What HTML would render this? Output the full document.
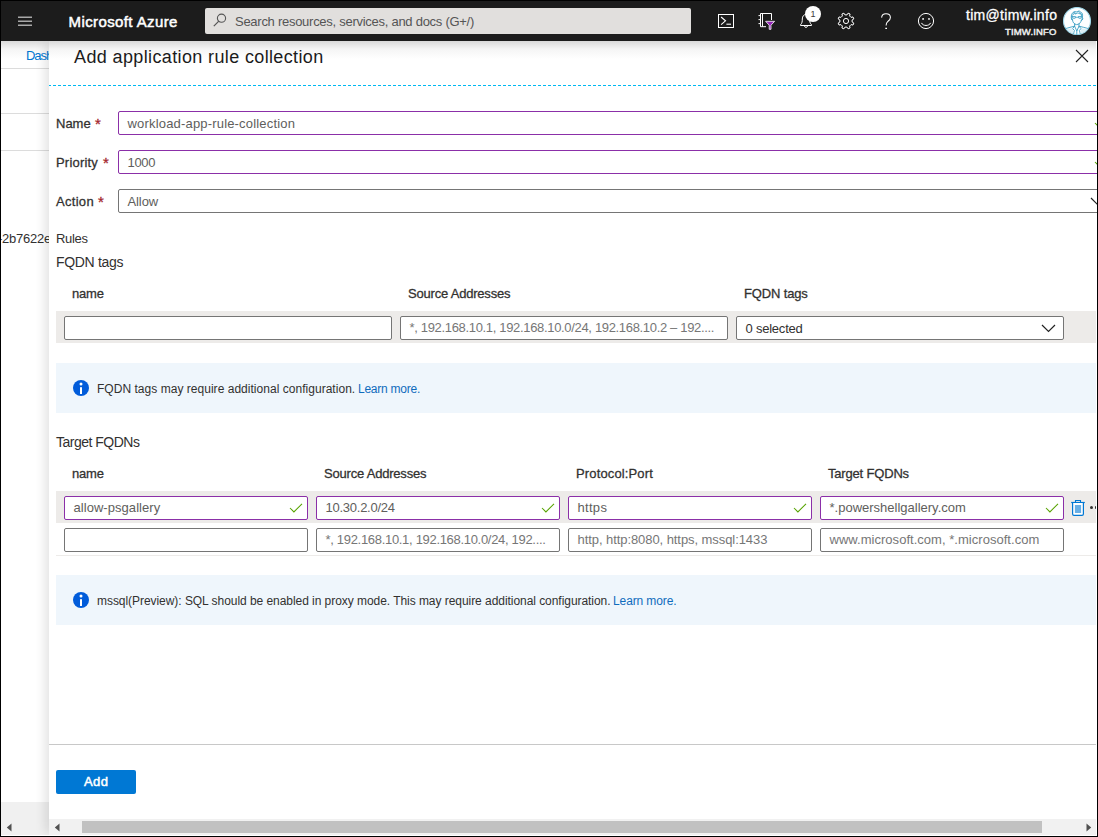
<!DOCTYPE html>
<html lang="en">
<head>
<meta charset="utf-8">
<title>Add application rule collection - Microsoft Azure</title>
<style>
html,body{margin:0;padding:0;}
body{width:1098px;height:837px;overflow:hidden;background:#fff;position:relative;
  font-family:"Liberation Sans",sans-serif;font-size:13px;color:#323130;}
*{box-sizing:border-box;}
.abs{position:absolute;}
.t{position:absolute;white-space:nowrap;line-height:1;}
.sb{-webkit-text-stroke:0.28px currentColor;}
/* frame */
#frame-l{left:0;top:0;width:1px;height:837px;background:#000;z-index:50;}
#frame-t{left:0;top:0;width:1098px;height:1px;background:#000;z-index:50;}
#frame-r{left:1097px;top:0;width:1px;height:837px;background:#000;z-index:50;}
#white-r{left:1096px;top:41px;width:1px;height:795px;background:#fff;z-index:48;}
#frame-b{left:0;top:835px;width:1098px;height:2px;background:linear-gradient(180deg,#fff 0 1px,#000 1px 2px);z-index:49;}
/* top bar */
#topbar{left:1px;top:1px;width:1096px;height:40px;background:#1c1c1c;z-index:20;}
#search{left:204px;top:7px;width:486px;height:26px;background:#e1dfdd;border-radius:2px;}
/* background page */
#bg{left:1px;top:41px;width:1095px;height:794px;background:#fff;}
.hl{position:absolute;left:0;width:48px;height:1px;background:#dcdcdc;}
#topshadow{left:1px;top:41px;width:1095px;height:18px;background:linear-gradient(180deg,rgba(0,0,0,.15),rgba(0,0,0,.04) 45%,rgba(0,0,0,0));z-index:15;pointer-events:none;}
/* panel */
#panel{left:49px;top:41px;width:1048px;overflow:hidden;height:794px;background:#fff;box-shadow:-6px 0 10px -2px rgba(0,0,0,.11);}
#dash{left:0;top:44px;width:1047px;height:1px;background:repeating-linear-gradient(90deg,#00b8f1 0 3px,transparent 3px 5px) -1px 0;}
.inp{position:absolute;height:24px;border:1px solid #757575;border-radius:2px;background:#fff;}
.inp.v{border-color:#8b2fa8;}
.inp > span{position:absolute;left:8.5px;top:5px;line-height:1;white-space:nowrap;color:#605e5c;}
.inp > span.ph{color:#767676;}
.inp.g > span{top:4px;}
.req{color:#a4262c;font-size:15px;}
.grow{position:absolute;left:7px;width:1040px;height:32px;background:#edebe9;}
.info{position:absolute;left:7px;width:1040px;height:50px;background:#eff6fc;}
.link{color:#0f6cbd;}
.chk{position:absolute;width:14px;height:10px;}
</style>
</head>
<body>
<div id="bg" class="abs">
  <span class="t" style="left:25px;top:8px;color:#0078d4;font-size:13px;letter-spacing:-1.05px;">Dashboard</span>
  <div class="hl" style="top:27px;"></div>
  <div class="hl" style="top:72px;"></div>
  <div class="hl" style="top:109px;"></div>
  <span class="t" style="left:-3px;top:191px;color:#323130;font-size:13px;letter-spacing:-.25px;">-2b7622e9</span>
  <div class="abs" style="left:0;top:761px;width:48px;height:33px;background:#f0f0f0;"></div>
  <svg class="abs" style="left:5px;top:782px;" width="6" height="9" viewBox="0 0 6 9"><path d="M5.5 0.5 L0.8 4.5 L5.5 8.5 Z" fill="#505050"/></svg>
</div>

<div id="panel" class="abs">
  <span class="t" id="title" style="left:25px;top:7px;font-size:18px;color:#1b1b1b;letter-spacing:.37px;">Add application rule collection</span>
  <svg class="abs" style="left:1026px;top:8px;" width="14" height="14" viewBox="0 0 14 14"><path d="M1 1 L13 13 M13 1 L1 13" stroke="#222" stroke-width="1.1" fill="none"/></svg>
  <div id="dash" class="abs"></div>

  <span class="t sb" style="left:7px;top:76px;">Name</span><span class="t sb req" style="left:46px;top:75px;">*</span>
  <div class="inp v" style="left:69px;top:70px;width:990px;"><svg class="chk" style="left:974.8px;top:6px;" width="14" height="10" viewBox="0 0 14 10"><path d="M1 5 L4.9 8.9 L13 0.8" stroke="#57a300" stroke-width="1.05" fill="none"/></svg><span style="letter-spacing:.18px;">workload-app-rule-collection</span></div>
  <span class="t sb" style="left:7px;top:115px;letter-spacing:.2px;">Priority</span><span class="t sb req" style="left:54px;top:114px;">*</span>
  <div class="inp v" style="left:69px;top:109px;width:990px;"><svg class="chk" style="left:974.8px;top:6px;" width="14" height="10" viewBox="0 0 14 10"><path d="M1 5 L4.9 8.9 L13 0.8" stroke="#57a300" stroke-width="1.05" fill="none"/></svg><span style="letter-spacing:-.3px;">1000</span></div>
  <span class="t sb" style="left:7px;top:154px;letter-spacing:.3px;">Action</span><span class="t sb req" style="left:49px;top:153px;">*</span>
  <div class="inp" style="left:69px;top:148px;width:990px;"><svg class="abs" style="left:970.5px;top:7px;" width="15" height="9" viewBox="0 0 15 9"><path d="M1 1 L7.5 7.5 L14 1" stroke="#222" stroke-width="1.2" fill="none"/></svg><span style="letter-spacing:-.1px;">Allow</span></div>

  <span class="t" style="left:7px;top:191px;letter-spacing:-.3px;">Rules</span>
  <span class="t" style="left:7px;top:214px;font-size:14px;letter-spacing:-.32px;">FQDN tags</span>

  <span class="t sb" style="left:23px;top:246px;letter-spacing:-.2px;">name</span>
  <span class="t sb" style="left:359px;top:246px;letter-spacing:-.2px;">Source Addresses</span>
  <span class="t sb" style="left:695px;top:246px;letter-spacing:-.15px;">FQDN tags</span>
  <div class="grow" style="top:270px;"></div>
  <div class="inp g" style="left:15px;top:275px;width:328px;"></div>
  <div class="inp g" style="left:351px;top:275px;width:328px;"><span class="ph" style="letter-spacing:-.33px;">*, 192.168.10.1, 192.168.10.0/24, 192.168.10.2 – 192....</span></div>
  <div class="inp" style="left:687px;top:275px;width:328px;"><span style="color:#323130;letter-spacing:-.22px;">0 selected</span>
    <svg class="abs" style="left:304px;top:7px;" width="15" height="9" viewBox="0 0 15 9"><path d="M1 1 L7.5 7.5 L14 1" stroke="#222" stroke-width="1.2" fill="none"/></svg>
  </div>

  <div class="info" style="top:322px;">
    <svg class="abs" style="left:17px;top:17px;" width="16" height="16" viewBox="0 0 16 16"><circle cx="8" cy="8" r="8" fill="#015cda"/><rect x="7" y="7.2" width="2" height="6.8" fill="#fff"/><circle cx="8" cy="4.05" r="1.5" fill="#fff"/></svg>
    <span class="t" style="left:41px;top:20px;font-size:12px;letter-spacing:.03px;">FQDN tags may require additional configuration.</span><span class="t link" style="left:302px;top:20px;font-size:12px;letter-spacing:-.24px;">Learn more.</span>
  </div>

  <span class="t" style="left:7px;top:394px;font-size:14px;letter-spacing:-.5px;">Target FQDNs</span>
  <span class="t sb" style="left:23px;top:426px;letter-spacing:-.2px;">name</span>
  <span class="t sb" style="left:275px;top:426px;letter-spacing:-.2px;">Source Addresses</span>
  <span class="t sb" style="left:527px;top:426px;letter-spacing:.14px;">Protocol:Port</span>
  <span class="t sb" style="left:779px;top:426px;letter-spacing:-.18px;">Target FQDNs</span>
  <div class="grow" style="top:450px;"></div>
  <div class="inp v g" style="left:15px;top:455px;width:244px;"><svg class="chk" style="left:224px;top:6px;" width="14" height="10" viewBox="0 0 14 10"><path d="M1 5 L4.9 8.9 L13 0.8" stroke="#57a300" stroke-width="1.05" fill="none"/></svg><span style="letter-spacing:.05px;">allow-psgallery</span></div>
  <div class="inp v g" style="left:267px;top:455px;width:244px;"><svg class="chk" style="left:224px;top:6px;" width="14" height="10" viewBox="0 0 14 10"><path d="M1 5 L4.9 8.9 L13 0.8" stroke="#57a300" stroke-width="1.05" fill="none"/></svg><span style="letter-spacing:-.25px;">10.30.2.0/24</span></div>
  <div class="inp v g" style="left:519px;top:455px;width:244px;"><svg class="chk" style="left:224px;top:6px;" width="14" height="10" viewBox="0 0 14 10"><path d="M1 5 L4.9 8.9 L13 0.8" stroke="#57a300" stroke-width="1.05" fill="none"/></svg><span style="letter-spacing:.3px;">https</span></div>
  <div class="inp v g" style="left:771px;top:455px;width:244px;"><svg class="chk" style="left:224px;top:6px;" width="14" height="10" viewBox="0 0 14 10"><path d="M1 5 L4.9 8.9 L13 0.8" stroke="#57a300" stroke-width="1.05" fill="none"/></svg><span style="letter-spacing:0px;">*.powershellgallery.com</span></div>

<svg class="abs" style="left:1021px;top:458px;" width="16" height="18" viewBox="0 0 16 18"><path d="M1.2 3.5 H14.8" stroke="#0078d4" stroke-width="1.2"/><path d="M5.5 3 V1.5 H10.5 V3" stroke="#0078d4" stroke-width="1.1" fill="none"/><path d="M2.6 4 V15 Q2.6 16.4 4 16.4 H12 Q13.4 16.4 13.4 15 V4" stroke="#0078d4" stroke-width="1.2" fill="#fff"/><rect x="4.9" y="6" width="6.2" height="8" fill="#69afe5"/></svg>
  <div class="abs" style="left:1041px;top:465px;width:3.2px;height:3.2px;border-radius:2px;background:#323130;"></div>
  <div class="abs" style="left:1046.2px;top:465px;width:.8px;height:3.2px;border-radius:2px 0 0 2px;background:#323130;"></div>
  <div class="inp g" style="left:15px;top:487px;width:244px;"></div>
  <div class="inp g" style="left:267px;top:487px;width:244px;"><span class="ph" style="letter-spacing:-.31px;">*, 192.168.10.1, 192.168.10.0/24, 192....</span></div>
  <div class="inp g" style="left:519px;top:487px;width:244px;"><span class="ph" style="letter-spacing:-.07px;">http, http:8080, https, mssql:1433</span></div>
  <div class="inp g" style="left:771px;top:487px;width:244px;"><span class="ph" style="letter-spacing:.03px;">www.microsoft.com, *.microsoft.com</span></div>
  <div class="abs" style="left:7px;top:514px;width:1040px;height:1px;background:#edebe9;"></div>

  <div class="info" style="top:534px;">
    <svg class="abs" style="left:17px;top:17px;" width="16" height="16" viewBox="0 0 16 16"><circle cx="8" cy="8" r="8" fill="#015cda"/><rect x="7" y="7.2" width="2" height="6.8" fill="#fff"/><circle cx="8" cy="4.05" r="1.5" fill="#fff"/></svg>
    <span class="t" style="left:41px;top:20px;font-size:12px;letter-spacing:-.05px;">mssql(Preview): SQL should be enabled in proxy mode. This may require additional configuration.</span><span class="t link" style="left:557px;top:20px;font-size:12px;letter-spacing:-.11px;">Learn more.</span>
  </div>

  <div class="abs" style="left:0;top:703px;width:1047px;height:1px;background:#c8c8c8;"></div>
  <div class="abs" style="left:7px;top:729px;width:80px;height:24px;background:#0078d4;border-radius:2px;"></div>
  <span class="t sb" style="left:35px;top:734px;color:#fff;letter-spacing:.4px;-webkit-text-stroke:.5px #fff;">Add</span>

  <div class="abs" style="left:0;top:778px;width:1047px;height:16px;background:#f1f1f1;"></div>
  <div class="abs" style="left:33px;top:780px;width:960px;height:12px;background:#c1c1c1;"></div>
  <svg class="abs" style="left:5px;top:782px;" width="6" height="9" viewBox="0 0 6 9"><path d="M5.5 0.5 L0.8 4.5 L5.5 8.5 Z" fill="#505050"/></svg>
  <svg class="abs" style="left:1037px;top:782px;" width="6" height="9" viewBox="0 0 6 9"><path d="M0.5 0.5 L5.2 4.5 L0.5 8.5 Z" fill="#505050"/></svg>
</div>

<div id="topshadow" class="abs"></div>

<div id="topbar" class="abs">
  <svg class="abs" style="left:17px;top:15px;" width="14" height="11" viewBox="0 0 14 11"><path d="M0 1.25h14M0 5.25h14M0 9.25h14" stroke="#a8a8a8" stroke-width="1.5"/></svg>
  <span class="t sb" id="brand" style="left:67.5px;top:13px;font-size:15px;color:#fff;letter-spacing:.4px;-webkit-text-stroke:.5px #fff;">Microsoft Azure</span>
  <div id="search" class="abs">
    <svg class="abs" style="left:8px;top:5.4px;" width="14" height="14" viewBox="0 0 14 14"><circle cx="8.5" cy="5.2" r="4.1" stroke="#555" stroke-width="1.1" fill="none"/><path d="M5.8 8.2 L0.8 13.2" stroke="#555" stroke-width="1.2"/></svg>
    <span class="t" style="left:30px;top:7px;font-size:13px;color:#555;letter-spacing:-.27px;">Search resources, services, and docs (G+/)</span>
  </div>
  <!-- cloud shell -->
  <svg class="abs" style="left:717px;top:13px;" width="16" height="14" viewBox="0 0 16 14"><rect x=".5" y=".5" width="15" height="13" fill="none" stroke="#fff" stroke-width="1"/><path d="M3.1 3 L7.5 6.8 L3.1 10.6" stroke="#fff" stroke-width="1.1" fill="none"/><path d="M8.4 10.2 H13" stroke="#fff" stroke-width="1.1"/></svg>
  <!-- directory + subscription filter -->
  <svg class="abs" style="left:756px;top:11px;" width="20" height="19" viewBox="0 0 20 19"><path d="M3.5 1.5 H14.5 V8 M3.5 1.5 V14.7 H9" stroke="#fff" stroke-width="1" fill="none"/><path d="M5.5 1.5 V14.7" stroke="#fff" stroke-width="1" fill="none"/><path d="M1.5 3.6 H4 M1.5 7.6 H4 M1.5 11.6 H4" stroke="#fff" stroke-width="1"/><path d="M8.6 9.3 H17.6 L14 13.2 V17.3 H12.2 V13.2 Z" fill="#9428b8" stroke="#fff" stroke-width=".8" stroke-linejoin="round"/></svg>
  <!-- notifications -->
  <svg class="abs" style="left:798px;top:12px;" width="14" height="17" viewBox="0 0 14 17"><path d="M1.5 12.5 V11.8 C3.2 10.2 3.3 8.4 3.3 6 C3.3 3.2 4.9 1.5 7 1.5 C9.1 1.5 10.7 3.2 10.7 6 C10.7 8.4 10.8 10.2 12.5 11.8 V12.5 Z" stroke="#fff" stroke-width="1" fill="none" stroke-linejoin="round"/><path d="M5.4 13.2 a1.7 1.7 0 0 0 3.2 0" stroke="#fff" stroke-width="1" fill="none"/></svg>
  <div class="abs" style="left:804px;top:5px;width:16px;height:16px;border-radius:8px;background:#fff;"></div>
  <span class="t" style="left:809.5px;top:8.5px;font-size:9px;color:#3b3a39;">1</span>
  <!-- settings -->
  <svg class="abs" style="left:836px;top:11px;" width="18" height="18" viewBox="0 0 18 18"><path d="M10.02 2.88 L11.08 1.17 L13.07 2.00 L12.60 3.96 L14.04 5.40 L16.00 4.93 L16.83 6.92 L15.12 7.98 L15.12 10.02 L16.83 11.08 L16.00 13.07 L14.04 12.60 L12.60 14.04 L13.07 16.00 L11.08 16.83 L10.02 15.12 L7.98 15.12 L6.92 16.83 L4.93 16.00 L5.40 14.04 L3.96 12.60 L2.00 13.07 L1.17 11.08 L2.88 10.02 L2.88 7.98 L1.17 6.92 L2.00 4.93 L3.96 5.40 L5.40 3.96 L4.93 2.00 L6.92 1.17 L7.98 2.88 Z" stroke="#fff" stroke-width="1" fill="none" stroke-linejoin="round"/><circle cx="9" cy="9" r="2.6" stroke="#fff" stroke-width="1" fill="none"/></svg>
  <!-- help -->
  <svg class="abs" style="left:878px;top:11px;" width="14" height="18" viewBox="0 0 14 18"><path d="M2.6 5.6 C2.8 3 4.6 1.7 7 1.7 C9.6 1.7 11.4 3.2 11.4 5.4 C11.4 7.4 10.2 8.3 8.9 9.4 C7.7 10.4 7.1 11.2 7.1 13.4" stroke="#fff" stroke-width="1.05" fill="none"/><path d="M6.3 16.4 H8" stroke="#fff" stroke-width="1.3"/></svg>
  <!-- feedback -->
  <svg class="abs" style="left:916px;top:11px;" width="18" height="18" viewBox="0 0 18 18"><circle cx="9" cy="9" r="7.6" stroke="#fff" stroke-width="1" fill="none"/><circle cx="6.1" cy="6.9" r=".95" fill="#fff"/><circle cx="12" cy="6.9" r=".95" fill="#fff"/><path d="M4.5 10.9 C5.8 14.3 12.2 14.3 13.6 10.9" stroke="#fff" stroke-width="1" fill="none"/></svg>
  <!-- account -->
  <span class="t sb" style="left:965px;top:7px;font-size:14px;color:#fff;letter-spacing:.3px;-webkit-text-stroke:.3px #fff;">tim@timw.info</span>
  <span class="t sb" style="left:1004px;top:25.6px;font-size:9.5px;color:#f0f0f0;letter-spacing:.15px;-webkit-text-stroke:.45px #f0f0f0;">TIMW.INFO</span>
  <svg class="abs" style="left:1062px;top:6px;" width="28" height="28" viewBox="0 0 28 28"><circle cx="14" cy="14" r="13.5" fill="#fdfeff" stroke="#9fd6e8" stroke-width="1.1"/><g fill="none" stroke="#3b9fc4" stroke-width=".9" stroke-linecap="round" stroke-linejoin="round"><path d="M8.6 12.6 C7.6 9.6 8.4 6 11 4.8 C12.2 4.2 13.4 4.6 14 5.2 C14.6 3.8 16.8 3.6 17.6 5 C19.6 5.6 20 8.4 19.2 10.2 C20.4 11 19.8 13 18.6 13.6"/><path d="M9.4 12.6 C9.6 15.2 11 17.4 13.6 17.6 C16.2 17.6 17.8 15.6 18.4 13.2"/><path d="M9.2 9.6 H12.4 M15.4 9.6 H18.4"/><path d="M9.6 8.2 C10.4 6.4 12 6 13 7.2 C13.6 5.8 15.4 5.6 16 6.8 C17.2 6.2 18.4 7 18.4 8.4 M10.4 5.8 C11.4 5.2 12.6 5.6 13 6.4 M14.8 4.6 C15.8 4.4 16.8 5 17 6 M17.6 6.4 C18.6 6.8 19 7.8 18.8 8.8 M8.8 9 C8.6 10.4 8.8 11.8 9.4 12.8 M19 9.4 C19.4 10.6 19.2 12 18.6 13"/><path d="M9.4 10 C9.2 12 12.2 12.2 12.6 10.4 M15.4 10.4 C15.8 12.2 18.6 12 18.4 10"/><path d="M12.6 10.6 C13.4 10 14.6 10 15.4 10.6"/><path d="M11.6 16.6 V19.4 M16 16.6 V19.4"/><path d="M2.6 21.6 C5.4 20.6 8.6 20 11.6 19.2 L13.8 24 L16 19.2 C19 20 22.4 20.6 25.4 21.6"/><path d="M11.6 19.2 L9.6 21.6 L11.4 23.4 L10.6 26.6 M16 19.2 L18 21.6 L16.4 23.4 L17.2 26.6"/><path d="M13.8 24 V27.4"/></g><path d="M3 21.8 L9.6 21.4 L10.6 26.6 C8 26 5 24.4 3 21.8 Z M25 21.8 L18 21.4 L17.2 26.6 C20 26 23 24.4 25 21.8 Z" fill="#cfe8f2" opacity=".7"/><path d="M9.4 10 C9.2 12 12.2 12.2 12.6 10.4 Z M15.4 10.4 C15.8 12.2 18.6 12 18.4 10 Z" fill="#8cc8de" opacity=".6"/></svg>
</div>

<div id="frame-l" class="abs"></div><div id="frame-t" class="abs"></div><div id="frame-r" class="abs"></div><div id="frame-b" class="abs"></div>
</body>
</html>
